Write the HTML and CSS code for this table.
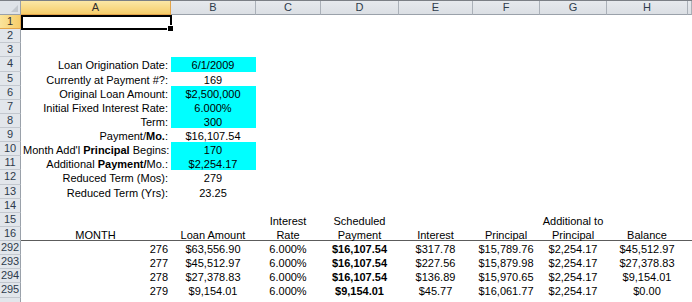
FILE: index.html
```html
<!DOCTYPE html>
<html>
<head>
<meta charset="utf-8">
<link rel="stylesheet" href="styles.css">
</head>
<body>
<div class="sheet">
  <div class="row colhead">
    <div class="hd corner"></div>
    <div class="hd hsel">A</div>
    <div class="hd">B</div>
    <div class="hd">C</div>
    <div class="hd">D</div>
    <div class="hd">E</div>
    <div class="hd">F</div>
    <div class="hd">G</div>
    <div class="hd">H</div>
    <div class="hd"></div>
  </div>

  <div class="row"><div class="rh rsel">1</div><div class="c sel"></div></div>
  <div class="row"><div class="rh">2</div></div>
  <div class="row"><div class="rh">3</div></div>
  <div class="row"><div class="rh">4</div><div class="c r">Loan Origination Date:</div><div class="c m cy">6/1/2009</div></div>
  <div class="row"><div class="rh">5</div><div class="c r">Currently at Payment #?:</div><div class="c m">169</div></div>
  <div class="row"><div class="rh">6</div><div class="c r">Original Loan Amount:</div><div class="c m cy">$2,500,000</div></div>
  <div class="row"><div class="rh">7</div><div class="c r">Initial Fixed Interest Rate:</div><div class="c m cy">6.000%</div></div>
  <div class="row"><div class="rh">8</div><div class="c r">Term:</div><div class="c m cy">300</div></div>
  <div class="row"><div class="rh">9</div><div class="c r">Payment/<b>Mo.</b>:</div><div class="c m">$16,107.54</div></div>
  <div class="row"><div class="rh">10</div><div class="c r">Month Add'l <b>Principal</b> Begins:</div><div class="c m cy">170</div></div>
  <div class="row"><div class="rh">11</div><div class="c r">Additional <b>Payment/</b>Mo.:</div><div class="c m cy">$2,254.17</div></div>
  <div class="row"><div class="rh">12</div><div class="c r">Reduced Term (Mos):</div><div class="c m">279</div></div>
  <div class="row"><div class="rh">13</div><div class="c r">Reduced Term (Yrs):</div><div class="c m">23.25</div></div>
  <div class="row"><div class="rh">14</div></div>
  <div class="row"><div class="rh">15</div><div class="c"></div><div class="c"></div><div class="c m">Interest</div><div class="c m">Scheduled</div><div class="c"></div><div class="c"></div><div class="c m">Additional to</div></div>
  <div class="row freeze"><div class="rh">16</div><div class="c m">MONTH</div><div class="c m">Loan Amount</div><div class="c m">Rate</div><div class="c m">Payment</div><div class="c m">Interest</div><div class="c m">Principal</div><div class="c m">Principal</div><div class="c m">Balance</div></div>

  <div class="row"><div class="rh">292</div><div class="c r">276</div><div class="c m">$63,556.90</div><div class="c m">6.000%</div><div class="c m"><b>$16,107.54</b></div><div class="c m">$317.78</div><div class="c m">$15,789.76</div><div class="c m">$2,254.17</div><div class="c m">$45,512.97</div></div>
  <div class="row"><div class="rh">293</div><div class="c r">277</div><div class="c m">$45,512.97</div><div class="c m">6.000%</div><div class="c m"><b>$16,107.54</b></div><div class="c m">$227.56</div><div class="c m">$15,879.98</div><div class="c m">$2,254.17</div><div class="c m">$27,378.83</div></div>
  <div class="row"><div class="rh">294</div><div class="c r">278</div><div class="c m">$27,378.83</div><div class="c m">6.000%</div><div class="c m"><b>$16,107.54</b></div><div class="c m">$136.89</div><div class="c m">$15,970.65</div><div class="c m">$2,254.17</div><div class="c m">$9,154.01</div></div>
  <div class="row"><div class="rh">295</div><div class="c r">279</div><div class="c m">$9,154.01</div><div class="c m">6.000%</div><div class="c m"><b>$9,154.01</b></div><div class="c m">$45.77</div><div class="c m">$16,061.77</div><div class="c m">$2,254.17</div><div class="c m">$0.00</div></div>
  <div class="row"><div class="rh"></div></div>
</div>
</body>
</html>
```

FILE: styles.css
```css
html, body {
  margin: 0;
  padding: 0;
  background: #ffffff;
}

body {
  font-family: "Liberation Sans", Arial, sans-serif;
  font-size: 11px;
  color: #000000;
  overflow: hidden;
}

.sheet {
  width: 692px;
  height: 302px;
  overflow: hidden;
}

.row {
  display: grid;
  grid-template-columns: 21px 150px 85px 65px 78px 74px 67px 67px 81px 1fr;
  height: 14.125px;
}

.colhead {
  height: 15px;
  border-top: 1px solid #7b7f85;
  box-sizing: border-box;
}

.hd {
  background: linear-gradient(#e6e9ed, #dbdfe4);
  border-right: 1px solid #aab0b8;
  border-bottom: 1px solid #9aa1aa;
  text-align: center;
  line-height: 13px;
  color: #2e3b4b;
  box-sizing: border-box;
}

.corner {
  position: relative;
  background: #dfe3e8;
  border-right-color: #9aa1aa;
}

.corner::after {
  content: "";
  position: absolute;
  right: 2px;
  bottom: 2px;
  width: 0;
  height: 0;
  border-left: 7px solid transparent;
  border-bottom: 7px solid #c3c8ce;
}

.hsel {
  background: linear-gradient(#fbe7a6, #f6cd6a);
  border-right-color: #e3a449;
  border-bottom-color: #e3a449;
  color: #303030;
}

.rh {
  background: #e2e6eb;
  border-right: 1px solid #9aa1aa;
  border-bottom: 1px solid #c3c8cf;
  box-sizing: border-box;
  text-align: center;
  line-height: 13px;
  color: #2e3b4b;
  letter-spacing: -0.2px;
}

.rsel {
  background: linear-gradient(90deg, #fbe49c, #f6cd6a);
  border-bottom-color: #e3a449;
  border-right-color: #e3a449;
  color: #303030;
}

.c {
  box-sizing: border-box;
  padding: 2px 3px 0 2px;
  line-height: 12px;
  white-space: nowrap;
  overflow: visible;
}

.r { text-align: right; }
.m { text-align: center; }

.cy { background: #00ffff; }

.freeze {
  box-shadow: inset 0 -1px 0 #5c5c5c;
}

.sel {
  position: relative;
}

.sel::before {
  content: "";
  position: absolute;
  left: 0;
  top: 0;
  right: -1px;
  bottom: -1px;
  border: 2px solid #000000;
}

.sel::after {
  content: "";
  position: absolute;
  right: -3px;
  bottom: -3px;
  width: 5px;
  height: 5px;
  background: #000000;
  border: 1px solid #ffffff;
}
```
